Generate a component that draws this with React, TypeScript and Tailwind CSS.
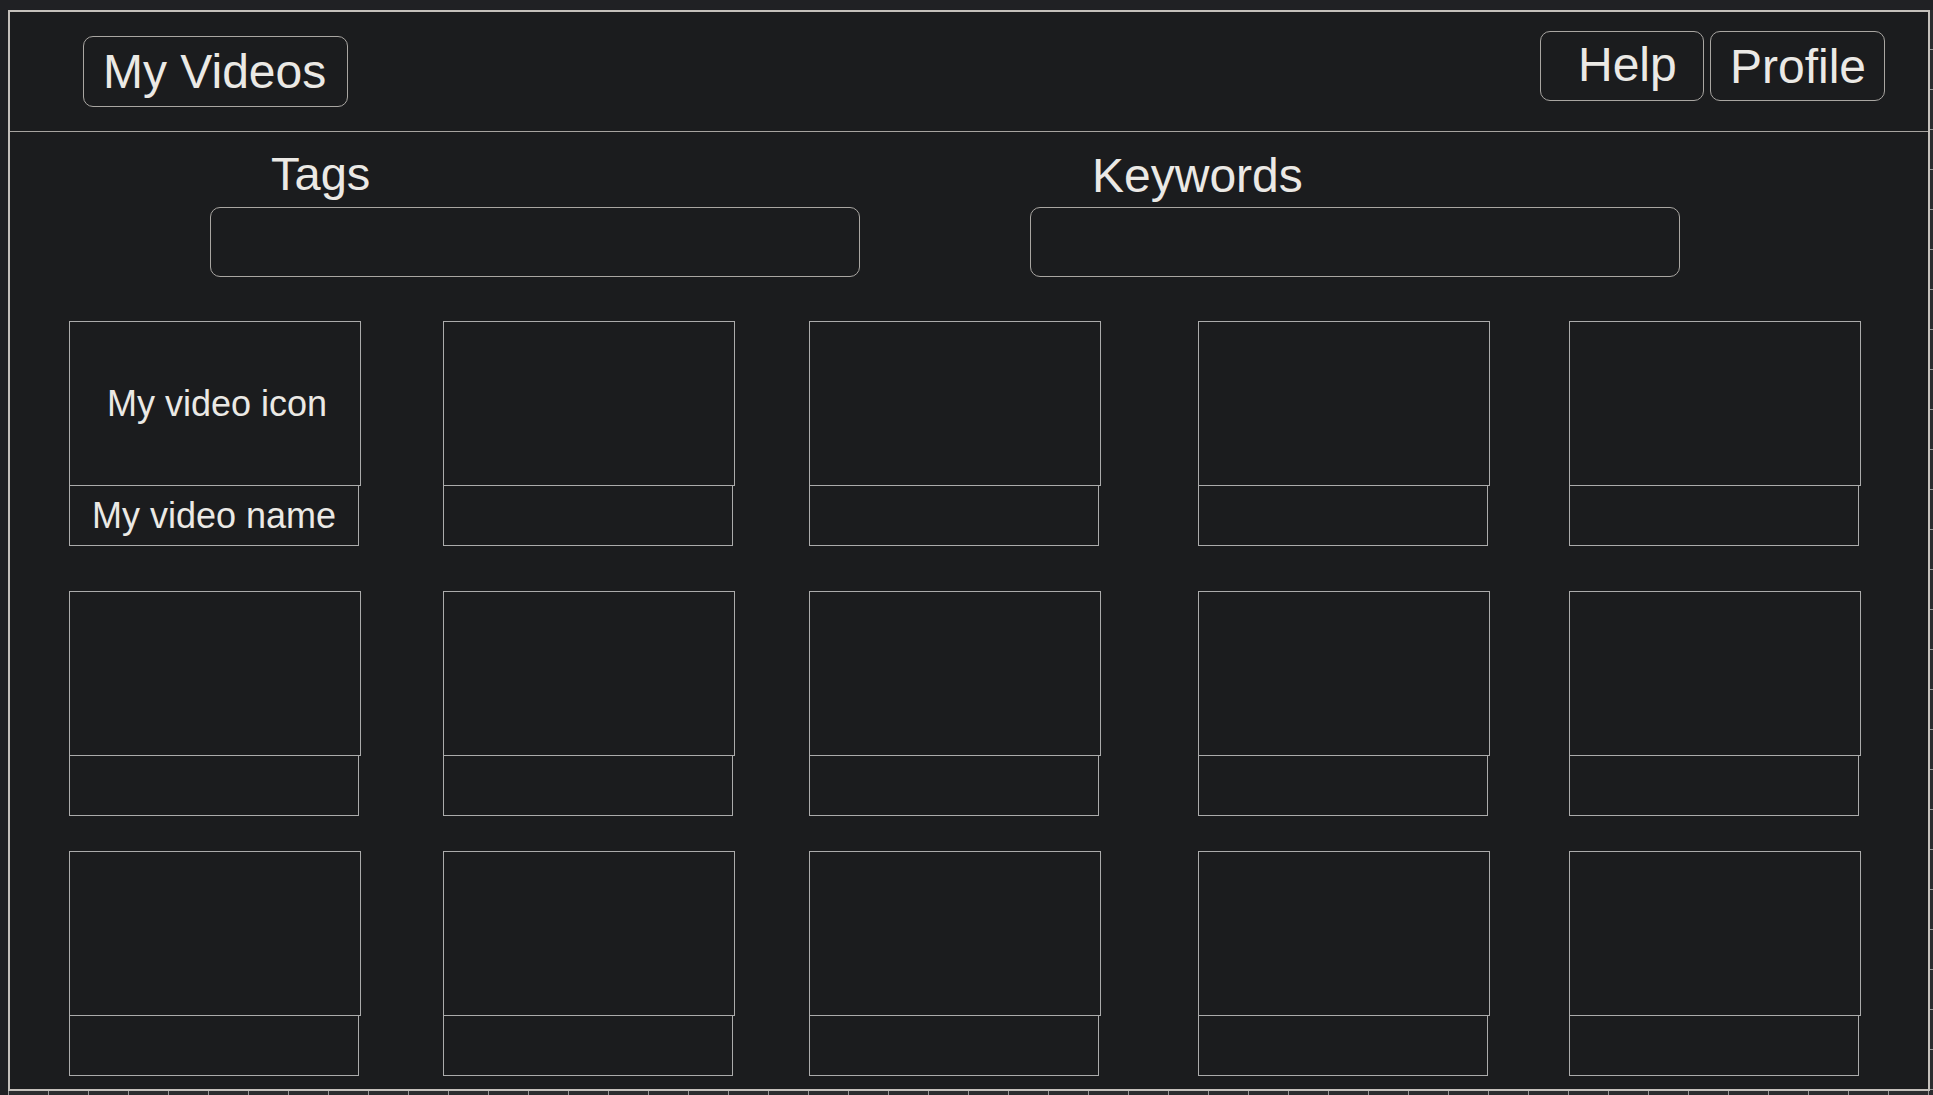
import React from 'react';

const colGaps = ['ml-[59px]', 'ml-[82px]', 'ml-[74px]', 'ml-[97px]', 'ml-[79px]'];

const rows = [
  { mt: 'mt-[44px]', first: true },
  { mt: 'mt-[45px]', first: false },
  { mt: 'mt-[35px]', first: false },
];

const VideoCard: React.FC<{ showText: boolean }> = ({ showText }) => (
  <div className="flex flex-col">
    <div className="w-[292px] h-[165px] border border-[#ababab] flex items-center justify-center">
      {showText && <span className="text-[36px] leading-none pl-[4px]">My video icon</span>}
    </div>
    <div className="w-[290px] h-[60px] border border-t-0 border-[#ababab] flex items-center justify-center">
      {showText && <span className="text-[36px] leading-none">My video name</span>}
    </div>
  </div>
);

export default function App() {
  return (
    <div
      className="w-[1933px] h-[1095px] overflow-hidden bg-[#202124] text-[#ebe9e5]"
      style={{ fontFamily: '"Liberation Sans", Arial, sans-serif' }}
    >
      <div className="flex pl-[8px] pt-[10px]">
        <div className="w-[1922px] h-[1081px] border-2 border-[#c4c0bb] bg-[#1b1c1e] flex flex-col">
          {/* Header */}
          <div className="h-[120px] border-b border-[#a7a4a0] flex justify-between items-start pl-[73px] pr-[43px]">
            <div className="mt-[24px] w-[265px] h-[71px] border border-[#a9a6a2] rounded-[10px] flex items-center pl-[19px]">
              <span className="text-[48px] leading-none">My Videos</span>
            </div>
            <div className="mt-[19px] flex gap-[6px]">
              <div className="w-[164px] h-[70px] border border-[#a9a6a2] rounded-[10px] flex items-center pl-[37px] pb-[3px]">
                <span className="text-[48px] leading-none">Help</span>
              </div>
              <div className="w-[175px] h-[70px] border border-[#a9a6a2] rounded-[10px] flex items-center pl-[19px] pt-[2px]">
                <span className="text-[48px] leading-none">Profile</span>
              </div>
            </div>
          </div>

          {/* Filters */}
          <div className="flex pl-[200px]">
            <div className="flex flex-col">
              <div className="mt-[18px] ml-[61px] text-[47px] leading-none">Tags</div>
              <div className="mt-[10px] w-[650px] h-[70px] border border-[#a9a6a2] rounded-[10px]" />
            </div>
            <div className="flex flex-col ml-[170px]">
              <div className="mt-[20px] ml-[62px] text-[48px] leading-none">Keywords</div>
              <div className="mt-[7px] w-[650px] h-[70px] border border-[#a9a6a2] rounded-[10px]" />
            </div>
          </div>

          {/* Video grid */}
          {rows.map((row, r) => (
            <div key={r} className={`flex ${row.mt}`}>
              {colGaps.map((gap, c) => (
                <div key={c} className={gap}>
                  <VideoCard showText={row.first && c === 0} />
                </div>
              ))}
            </div>
          ))}
        </div>
        <div className="w-[3px] h-[1081px] bg-[repeating-linear-gradient(180deg,#2c2d2f_0px,#2c2d2f_39px,#9a9a9a_39px,#9a9a9a_40px)]" />
      </div>
      <div className="ml-[8px] w-[1925px] h-[4px] bg-[repeating-linear-gradient(90deg,#9a9a9a_0px,#9a9a9a_1px,#2c2d2f_1px,#2c2d2f_40px)]" />
    </div>
  );
}
